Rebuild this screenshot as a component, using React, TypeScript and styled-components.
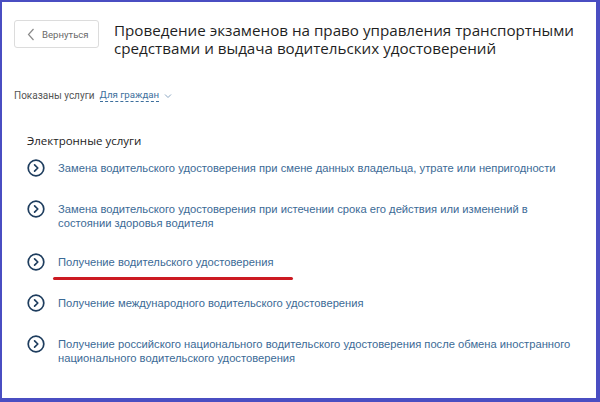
import React from "react";
import styled, { createGlobalStyle } from "styled-components";

const Global = createGlobalStyle`
  html, body { margin: 0; padding: 0; background: #ffffff; }
  * { box-sizing: border-box; }
`;

const Frame = styled.div`
  width: 600px;
  height: 402px;
  border-style: solid;
  border-color: #4a4ec2;
  border-width: 2px 4px 4px 2px;
  background: #ffffff;
  padding: 18px 0 0 12px;
  display: flex;
  flex-direction: column;
  overflow: hidden;
`;

const Header = styled.div`
  display: flex;
  align-items: flex-start;
  gap: 15px;
`;

const BackButton = styled.button`
  width: 85px;
  height: 28px;
  border: 1px solid #dcdcdc;
  border-radius: 3px;
  background: #fff;
  display: flex;
  align-items: center;
  gap: 7px;
  padding: 0 0 0 12px;
  font-family: Roboto, "Open Sans", sans-serif;
  font-size: 9.6px;
  color: #6a6a6a;
  flex-shrink: 0;
`;

const Title = styled.h1`
  margin: 0;
  margin-top: 1px;
  font-family: "Open Sans", "Noto Sans", sans-serif;
  font-weight: 400;
  font-size: 15.2px;
  line-height: 18px;
  color: #1f1f1f;
  white-space: nowrap;
`;

const FilterRow = styled.div`
  display: flex;
  align-items: center;
  margin-top: 32px;
  font-family: Roboto, "Open Sans", sans-serif;
  font-size: 10px;
  color: #555;
  gap: 5px;
`;

const FilterLink = styled.span`
  color: #3c6e9c;
  border-bottom: 1px dashed #3c6e9c;
  padding-bottom: 1px;
  font-size: 9.7px;
`;

const Section = styled.div`
  padding-left: 13px;
  margin-top: 31px;
`;

const SectionTitle = styled.div`
  font-family: "Open Sans", "Noto Sans", sans-serif;
  font-size: 11.5px;
  color: #222;
  line-height: 16px;
`;

const List = styled.div`
  display: flex;
  flex-direction: column;
  margin-top: 12px;
  gap: 25px;
`;

const Item = styled.div`
  display: flex;
  align-items: flex-start;
  gap: 13px;
`;

const ItemText = styled.div<{ $marked?: boolean }>`
  font-family: "Liberation Sans", Arial, sans-serif;
  font-size: 11.2px;
  line-height: 14px;
  color: #3b6a96;
  width: 520px;
  position: relative;
  ${(p) =>
    p.$marked
      ? `&::after { content: ""; position: absolute; left: -5px; width: 240px; top: 22px; height: 3px; border-radius: 2px; background: #cc1a22; }`
      : ""}
`;

const Arrow = () => (
  <svg width="18" height="18" viewBox="0 0 18 18" style={{ flexShrink: 0, marginTop: -2 }}>
    <circle cx="9" cy="9" r="7.8" fill="none" stroke="#1e3d5e" strokeWidth="1.7" />
    <path d="M7.6 5.8 L10.8 9 L7.6 12.2" fill="none" stroke="#1e3d5e" strokeWidth="1.7" strokeLinecap="round" strokeLinejoin="round" />
  </svg>
);

const items = [
  { t: "Замена водительского удостоверения при смене данных владельца, утрате или непригодности" },
  { t: "Замена водительского удостоверения при истечении срока его действия или изменений в состоянии здоровья водителя" },
  { t: "Получение водительского удостоверения", marked: true },
  { t: "Получение международного водительского удостоверения" },
  { t: "Получение российского национального водительского удостоверения после обмена иностранного национального водительского удостоверения" },
];

export default function App() {
  return (
    <>
      <Global />
      <Frame>
        <Header>
          <BackButton>
            <svg width="8" height="13" viewBox="0 0 8 13">
              <path d="M6.5 1 L1.5 6.5 L6.5 12" fill="none" stroke="#8a8a8a" strokeWidth="1.2" />
            </svg>
            Вернуться
          </BackButton>
          <Title>
            Проведение экзаменов на право управления транспортными
            <br />
            средствами и выдача водительских удостоверений
          </Title>
        </Header>
        <FilterRow>
          Показаны услуги
          <FilterLink>Для граждан</FilterLink>
          <svg width="8" height="6" viewBox="0 0 8 6">
            <path d="M1 1.5 L4 4.5 L7 1.5" fill="none" stroke="#8aa6c2" strokeWidth="1" />
          </svg>
        </FilterRow>
        <Section>
          <SectionTitle>Электронные услуги</SectionTitle>
          <List>
            {items.map((it, i) => (
              <Item key={i}>
                <Arrow />
                <ItemText $marked={it.marked}>{it.t}</ItemText>
              </Item>
            ))}
          </List>
        </Section>
      </Frame>
    </>
  );
}
